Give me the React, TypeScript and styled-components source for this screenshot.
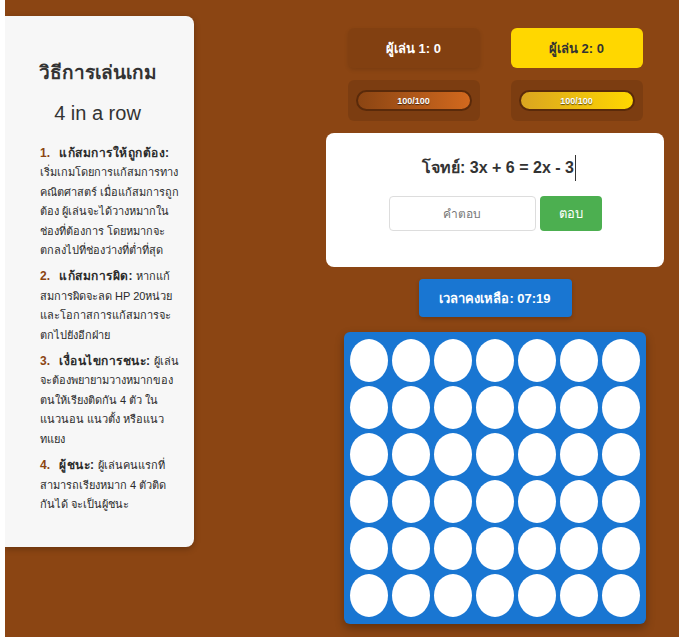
import React from "react";
import styled, { createGlobalStyle } from "styled-components";

const Global = createGlobalStyle`
  html, body { margin: 0; padding: 0; background: #ffffff; }
  body { font-family: "Liberation Sans", "Noto Sans", sans-serif; }
`;

const Page = styled.div`
  margin-left: 5px;
  height: 637px;
  background: #8b4513;
  display: flex;
  align-items: flex-start;
  overflow: hidden;
`;

const Rules = styled.aside`
  width: 189px;
  margin-top: 16px;
  height: 531px;
  box-sizing: border-box;
  background: #f7f7f7;
  border-radius: 0 8px 8px 0;
  box-shadow: 0 2px 6px rgba(0,0,0,0.25);
  padding: 44px 10px 0 35px;
  color: #333;
`;

const RulesTitle = styled.h2`
  margin: 0 0 0 -29px;
  text-align: center;
  font-size: 19px;
  font-weight: bold;
  line-height: 26px;
`;

const RulesSub = styled.h3`
  margin: 14px 0 18px -29px;
  text-align: center;
  font-size: 20px;
  font-weight: normal;
  line-height: 26px;
`;

const RuleList = styled.ol`
  margin: 0;
  padding: 0;
  list-style: none;
`;

const RuleItem = styled.li`
  font-size: 11px;
  line-height: 19.4px;
  margin-bottom: 7px;
  color: #2b2b2b;
`;

const Line = styled.span`
  display: block;
  white-space: nowrap;
`;

const Num = styled.span`
  color: #8b4513;
  font-weight: bold;
  font-size: 12px;
  margin-right: 9px;
`;

const Label = styled.strong`
  font-weight: bold;
  font-size: 12px;
  letter-spacing: 0.5px;
`;

const Main = styled.main`
  margin-left: 132px;
  width: 338px;
  padding-top: 28px;
  display: flex;
  flex-direction: column;
  align-items: center;
`;

const Row = styled.div`
  display: flex;
  gap: 31px;
`;

const ScoreBox = styled.div<{ $active?: boolean }>`
  width: 132px;
  height: 40px;
  border-radius: 6px;
  display: flex;
  align-items: center;
  justify-content: center;
  font-size: 13px;
  font-weight: bold;
  background: ${(p) => (p.$active ? "#ffd700" : "rgba(0,0,0,0.06)")};
  color: ${(p) => (p.$active ? "#333" : "#fff")};
  box-shadow: ${(p) => (p.$active ? "none" : "0 2px 4px rgba(0,0,0,0.12)")};
`;

const HealthBox = styled.div`
  width: 132px;
  height: 41px;
  box-sizing: border-box;
  padding: 10px 8px;
  border-radius: 6px;
  background: rgba(0,0,0,0.1);
  margin-top: 12px;
`;

const HealthBar = styled.div<{ $from: string; $to: string }>`
  height: 21px;
  box-sizing: border-box;
  border: 2px solid #5a2a0a;
  border-radius: 11px;
  background: linear-gradient(90deg, ${(p) => p.$from}, ${(p) => p.$to});
  display: flex;
  align-items: center;
  justify-content: center;
  color: #fff;
  font-size: 9px;
  font-weight: bold;
  text-shadow: 0 1px 1px rgba(0,0,0,0.6);
`;

const Card = styled.section`
  margin-top: 12px;
  width: 338px;
  height: 134px;
  box-sizing: border-box;
  background: #fff;
  border-radius: 8px;
  display: flex;
  flex-direction: column;
  align-items: center;
  padding-top: 22px;
`;

const Question = styled.div`
  font-size: 16px;
  font-weight: bold;
  color: #333;
  line-height: 26px;
  border-right: 1px solid #333;
  padding-right: 1px;
  margin-left: 8px;
`;

const AnswerRow = styled.div`
  display: flex;
  gap: 4px;
  margin-top: 15px;
`;

const Input = styled.input`
  width: 147px;
  height: 35px;
  box-sizing: border-box;
  border: 1px solid #ddd;
  border-radius: 4px;
  text-align: center;
  font-size: 12px;
  font-family: inherit;
  &::placeholder { color: #777; }
`;

const Submit = styled.button`
  width: 62px;
  height: 35px;
  border: none;
  border-radius: 4px;
  background: #4caf50;
  color: #fff;
  font-size: 13px;
  font-family: inherit;
`;

const Timer = styled.div`
  margin-top: 12px;
  width: 153px;
  height: 38px;
  border-radius: 4px;
  background: #1976d2;
  color: #fff;
  font-size: 13px;
  font-weight: bold;
  display: flex;
  align-items: center;
  justify-content: center;
  box-shadow: 0 2px 4px rgba(0,0,0,0.2);
`;

const Board = styled.div`
  margin-top: 15px;
  width: 302px;
  box-sizing: border-box;
  padding: 7px 6px;
  background: #1976d2;
  border-radius: 6px;
  display: grid;
  grid-template-columns: repeat(7, 38px);
  grid-auto-rows: 43px;
  gap: 4px;
  box-shadow: 0 4px 10px rgba(0,0,0,0.3);
`;

const Cell = styled.div`
  background: #fff;
  border-radius: 50%;
`;

const rules = [
  {
    label: "แก้สมการให้ถูกต้อง:",
    first: "",
    lines: [
      "เริ่มเกมโดยการแก้สมการทาง",
      "คณิตศาสตร์ เมื่อแก้สมการถูก",
      "ต้อง ผู้เล่นจะได้วางหมากใน",
      "ช่องที่ต้องการ โดยหมากจะ",
      "ตกลงไปที่ช่องว่างที่ต่ำที่สุด",
    ],
  },
  {
    label: "แก้สมการผิด:",
    first: " หากแก้",
    lines: ["สมการผิดจะลด HP 20หน่วย", "และโอกาสการแก้สมการจะ", "ตกไปยังอีกฝ่าย"],
  },
  {
    label: "เงื่อนไขการชนะ:",
    first: " ผู้เล่น",
    lines: ["จะต้องพยายามวางหมากของ", "ตนให้เรียงติดกัน 4 ตัว ใน", "แนวนอน แนวตั้ง หรือแนว", "ทแยง"],
  },
  {
    label: "ผู้ชนะ:",
    first: " ผู้เล่นคนแรกที่",
    lines: ["สามารถเรียงหมาก 4 ตัวติด", "กันได้ จะเป็นผู้ชนะ"],
  },
];

export default function App() {
  return (
    <>
      <Global />
      <Page>
        <Rules>
          <RulesTitle>วิธีการเล่นเกม</RulesTitle>
          <RulesSub>4 in a row</RulesSub>
          <RuleList>
            {rules.map((r, i) => (
              <RuleItem key={i}>
                <Line>
                  <Num>{i + 1}.</Num>
                  <Label>{r.label}</Label>
                  {r.first}
                </Line>
                {r.lines.map((l, j) => (
                  <Line key={j}>{l}</Line>
                ))}
              </RuleItem>
            ))}
          </RuleList>
        </Rules>
        <Main>
          <Row>
            <ScoreBox>ผู้เล่น 1: 0</ScoreBox>
            <ScoreBox $active>ผู้เล่น 2: 0</ScoreBox>
          </Row>
          <Row>
            <HealthBox>
              <HealthBar $from="#8b4513" $to="#d2691e">100/100</HealthBar>
            </HealthBox>
            <HealthBox>
              <HealthBar $from="#daa520" $to="#ffd700">100/100</HealthBar>
            </HealthBox>
          </Row>
          <Card>
            <Question>โจทย์: 3x + 6 = 2x - 3</Question>
            <AnswerRow>
              <Input placeholder="คำตอบ" />
              <Submit>ตอบ</Submit>
            </AnswerRow>
          </Card>
          <Timer>เวลาคงเหลือ: 07:19</Timer>
          <Board>
            {Array.from({ length: 42 }).map((_, i) => (
              <Cell key={i} />
            ))}
          </Board>
        </Main>
      </Page>
    </>
  );
}
